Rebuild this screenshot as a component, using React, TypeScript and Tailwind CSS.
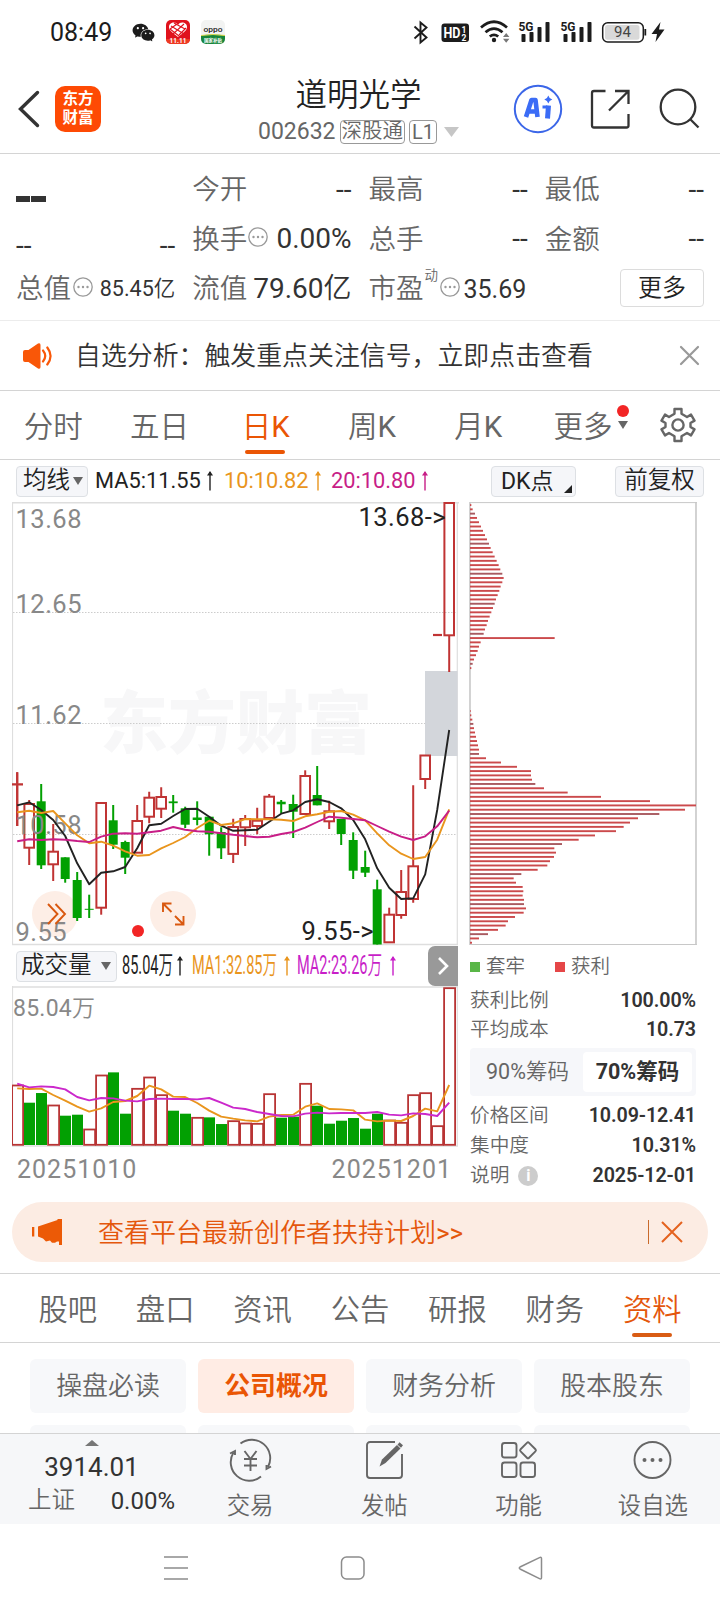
import React from "react";
import { AiFillWechat } from "react-icons/ai";

const FONT = "font-['Roboto','Noto_Sans_CJK_SC',sans-serif]";
const RED = "#c03434";
const GREEN = "#02a002";

type Candle = { t: "r" | "g" | "x"; o: number; c: number; h: number; l: number };

// Screen-space candles: body top, body bottom, wick top, wick bottom.
const rawCandles: [string, number, number, number, number][] = [
  ["r", 783, 785.6, 772.3, 826],
  ["r", 804, 847.7, 800, 865],
  ["g", 801.3, 865.3, 784, 869],
  ["r", 851.7, 864.3, 824, 881],
  ["g", 857.3, 879, 857.3, 882.7],
  ["g", 880, 918, 872, 921],
  ["g", 908.8, 909.8, 894.7, 918],
  ["r", 803, 907.7, 803, 914.7],
  ["g", 820.3, 844.7, 805, 849],
  ["g", 842, 857.7, 840.7, 874],
  ["r", 821, 852.7, 805, 852.7],
  ["r", 797.7, 816.7, 791.7, 823.3],
  ["r", 797, 808.7, 787.3, 818],
  ["g", 801.4, 803.2, 795, 812.7],
  ["g", 808.3, 824.7, 806.7, 828],
  ["g", 817.5, 820, 801.3, 825.3],
  ["g", 816.7, 834.3, 816.7, 855.7],
  ["g", 832, 848.3, 827.3, 859],
  ["r", 827, 853.9, 818.7, 863],
  ["r", 819, 827.3, 815, 846],
  ["r", 820.7, 826, 807.7, 834.3],
  ["r", 796.7, 818, 794, 818],
  ["g", 801.7, 804.3, 800, 813.3],
  ["g", 804, 811.7, 794.7, 838],
  ["r", 776, 814, 770.3, 814],
  ["g", 795, 805.3, 766, 805.3],
  ["r", 811.3, 821.3, 800.7, 829],
  ["g", 819, 834, 819, 845],
  ["g", 840, 870.7, 832.3, 879],
  ["g", 867, 872.7, 850.7, 877],
  ["g", 889.3, 944.5, 879.7, 944.5],
  ["r", 914.7, 942.3, 907.7, 942.3],
  ["r", 892, 915, 870, 918.7],
  ["r", 866.3, 899, 785.3, 902.7],
  ["r", 755.5, 779, 755.5, 789],
  ["x", 635, 635, 635, 635],
  ["r", 503, 635.3, 503, 672],
];
const candles: Candle[] = rawCandles.map(([t, o, c, h, l]) => ({ t: t as Candle["t"], o, c, h, l }));

const ma5 = [805.3, 802.3, 810, 820, 836, 863.3, 884.3, 872.7, 871.3, 867, 848.3, 825.3, 823.7, 816, 809, 808.7, 816.7, 825.7, 830.8, 830.3, 829.7, 821.7, 813.7, 810.3, 802, 799.3, 802, 808.3, 820, 839.3, 868.3, 887.7, 899, 898.3, 874.3, 810, 730];
const ma10 = [812.3, 810.7, 813, 811, 823.3, 835.3, 843.3, 841.7, 845.7, 851.3, 855.7, 855, 848.3, 843, 837, 828, 820.7, 825, 823.3, 819, 819.3, 819.3, 819.7, 821, 816.3, 814.3, 811.7, 811, 814.7, 820.3, 833.3, 845.3, 853.7, 859, 857, 839.7, 809.3];
const ma20 = [841.3, 839.3, 840, 839.3, 839.7, 841, 842, 836.7, 833.7, 833.3, 833.7, 832.3, 830.7, 827, 829.7, 831.3, 831.7, 833.3, 834.8, 836, 837.3, 836.7, 834, 832, 827.7, 822, 816.7, 817.7, 819, 820.3, 826, 831.7, 836.7, 840, 836.3, 826.3, 810.7];

const volumes: [string, number][] = [
  ["r", 315], ["g", 369], ["g", 340], ["r", 375], ["g", 408], ["g", 405], ["r", 447], ["r", 285], ["g", 278], ["g", 402],
  ["r", 325], ["r", 291], ["r", 344], ["g", 393], ["g", 402], ["r", 412], ["g", 413], ["g", 433], ["r", 422], ["r", 429],
  ["r", 430], ["r", 341], ["g", 414], ["g", 411], ["r", 310], ["g", 378], ["g", 432], ["g", 423], ["g", 415], ["g", 447],
  ["g", 402], ["r", 420], ["r", 427], ["r", 344], ["r", 338], ["r", 437], ["r", 23],
];
const volMa1 = [325, 327, 326, 345, 362, 380, 395, 385, 366, 363, 348, 317, 328, 350, 351, 369, 392, 410, 416, 421, 424, 410, 405, 404, 380, 370, 387, 388, 391, 419, 424, 422, 423, 408, 386, 394, 315];
const volMa2 = [311, 322, 319, 321, 328, 351, 361, 354, 355, 362, 364, 357, 356, 357, 357, 358, 354, 368, 383, 387, 396, 402, 408, 409, 401, 398, 400, 399, 399, 399, 396, 404, 406, 400, 402, 408, 368];

const chips: number[] = [
  4, 8, 15, 21, 27, 33, 39, 45, 51, 57, 62, 68, 74, 80, 86, 91, 97, 101, 97, 92, 88, 83, 78, 74, 69, 64, 59, 54, 50, 45, 41, 254,
  32, 27, 23, 18, 12, 8, 4, 0, 0, 0, 0, 0, 0, 0, 0, 0,
  2, 4, 7, 10, 12, 15, 18, 21, 24, 27, 27, 48, 93, 141, 183, 183, 186, 196, 222, 293, 393, 540, 678, 645, 568, 504, 480, 461,
  438, 375, 326, 276, 253, 258, 252, 240, 232, 203, 154, 131, 138, 158, 160, 158, 162, 162, 168, 161, 135, 114, 107, 84, 54, 27, 6,
];

const cx = (k: number) => 17.2 + 12 * k;
const points = (ys: number[]) => ys.map((y, k) => `${cx(k)},${y}`).join(" ");
const vy = (v: number) => 980 + v / 3;

function StatusBar() {
  return (
    <div className="flex h-[64px] items-center justify-between pl-[50px] pr-[54px]">
      <div className="flex items-center">
        <span className="w-[81px] text-[25px] leading-none text-[#1c1c1c]">08:49</span>
        <AiFillWechat className="size-[25px] text-[#1c1c1c]" />
        <svg className="ml-[10px]" width="24" height="24" viewBox="0 0 24 24">
          <rect width="24" height="24" rx="5" fill="#e0121c" />
          <path d="M0 19h24a5 5 0 0 1-5 5H5a5 5 0 0 1-5-5z" fill="#ee3a22" />
          <path d="M12 17C7 13 3 10.500 3 7c0-5 7-6 9-2 2-4 9-3 9 2 0 3.500-4 6-9 10z" fill="#fff" />
          <path d="M5 6l13 8M8 3l11 6M4 9l9 7M18 4L7 14M20 8l-7 7M11 4L4 9" stroke="#e0121c" strokeWidth="1.100" />
          <text x="12" y="23" fontSize="6.500" fontWeight="700" fill="#fff" textAnchor="middle">11.11</text>
        </svg>
        <svg className="ml-[11px]" width="24" height="24" viewBox="0 0 24 24">
          <rect width="24" height="24" rx="5" fill="#f2f3f2" />
          <path d="M0 15.500q12-2 24 0V19a5 5 0 0 1-5 5H5a5 5 0 0 1-5-5z" fill="#16853b" />
          <path d="M0 15.500q12-2 24 0" stroke="#d8d94c" strokeWidth="1" fill="none" />
          <text x="12" y="11.500" fontSize="8" fontWeight="500" fill="#222" textAnchor="middle" textLength="19" lengthAdjust="spacingAndGlyphs">oppo</text>
          <text x="12" y="22" fontSize="4.500" fontWeight="700" fill="#fff" textAnchor="middle">国家补贴</text>
        </svg>
      </div>
      <svg width="256" height="28" viewBox="410 18 256 28" fill="#1c1c1c">
        <path d="M414.500 26.500l12 11-6 5V22.500l6 5-12 11" fill="none" stroke="#1c1c1c" strokeWidth="1.900" />
        <rect x="441.500" y="23.500" width="27.500" height="18.500" rx="3" />
        <text x="443.500" y="38" fontSize="14" fontWeight="700" fill="#fff" textLength="17" lengthAdjust="spacingAndGlyphs">HD</text>
        <text x="461.500" y="32.500" fontSize="8.500" fontWeight="700" fill="#fff">1</text>
        <text x="461.500" y="40.500" fontSize="8.500" fontWeight="700" fill="#fff">2</text>
        <g fill="none" stroke="#1c1c1c" strokeWidth="2.700">
          <path d="M481 27.500q13-11.500 26 0" />
          <path d="M485.500 32.300q8.500-7.500 17 0" />
          <path d="M489.800 36.600q4.200-3.600 8.400 0" />
        </g>
        <circle cx="494" cy="40" r="2.200" />
        <path d="M503 37l3.200-4 3.200 4zM503 38.800l3.200 4 3.200-4z" fill="#777" />
        {[519, 561].map((x) => (
          <g key={x}>
            <text x={x - 0.5} y="31" fontSize="12.500" fontWeight="700" textLength="15" lengthAdjust="spacingAndGlyphs">5G</text>
            <rect x={x + 2.5} y="34" width="4" height="8" rx=".8" />
            <rect x={x + 10.5} y="32" width="4" height="10" rx=".8" />
            <rect x={x + 18.5} y="27" width="4" height="15" rx=".8" />
            <rect x={x + 26.5} y="22" width="4" height="20" rx=".8" />
          </g>
        ))}
        <rect x="602.700" y="22.700" width="40.600" height="19.300" rx="5" fill="#fff" stroke="#1c1c1c" strokeWidth="1.500" />
        <rect x="605" y="25" width="34.500" height="14.700" rx="2.500" fill="#d9d9d9" />
        <path d="M645.300 29v6.500" stroke="#1c1c1c" strokeWidth="1.800" />
        <text x="622.500" y="37.300" fontSize="15" fill="#444" textAnchor="middle">94</text>
        <path d="M660.500 22l-9 12h5.500l-1.500 8 9-12.500h-5.500z" />
      </svg>
    </div>
  );
}

function Header() {
  return (
    <header className="flex h-[90px] items-center justify-between border-b border-[#d4d4d4] pl-[17px] pr-[20px]">
      <div className="flex w-[190px] items-center">
        <svg width="24" height="38" viewBox="17 90 24 38">
          <path d="M37.500 92.500L20.500 109l17 16.500" fill="none" stroke="#333" strokeWidth="3.400" strokeLinecap="round" />
        </svg>
        <div className="ml-[14px] flex size-[46px] flex-col items-center justify-center rounded-[10px] bg-[#fe4a04] text-[15.500px] leading-[19px] font-bold text-white">
          <span>东方</span>
          <span>财富</span>
        </div>
      </div>
      <div className="flex flex-col items-center pt-[3px]">
        <h1 className="text-[31.500px] leading-[40px] font-[350] text-[#222]">道明光学</h1>
        <div className="mt-[3px] flex h-[26px] items-center text-[#666]">
          <span className="text-[23px] leading-none">002632</span>
          <span className="ml-[4px] flex h-[24px] items-center rounded-[4px] border-[1.500px] border-[#999] px-[1px] text-[20.500px] font-[350]">深股通</span>
          <span className="ml-[4px] flex h-[24px] items-center rounded-[4px] border-[1.500px] border-[#999] px-[2px] text-[20px]">L1</span>
          <svg className="ml-[7px]" width="15" height="10"><path d="M0 0h15L7.500 10z" fill="#c6c6c6" /></svg>
        </div>
      </div>
      <svg width="190" height="50" viewBox="511 84 190 50" fill="none" stroke="#333" strokeWidth="2.300">
        <circle cx="539" cy="109" r="23.200" stroke="#3b66e8" strokeWidth="2" />
        <path d="M527 117L532.500 100H536.500L538.500 117M530.500 111.500H536" stroke="#3b6cf6" strokeWidth="4.600" strokeLinejoin="round" />
        <path d="M549.500 105.500l-1 13" stroke="#3b6cf6" strokeWidth="5" />
        <path d="M543.500 107h4M551 116.500h-4" stroke="#3b6cf6" strokeWidth="3" />
        <path d="M549.300 95.500q.8 3.200 4 4-3.200.8-4 4-.8-3.200-4-4 3.200-.8 4-4z" fill="#3b6cf6" stroke="none" />
        <path d="M606.500 91H595a2 2 0 0 0-2 2v32.500a2 2 0 0 0 2 2h32.500a2 2 0 0 0 2-2V114M616 91h13.500v13M629 91.500L610 110.500" />
        <circle cx="679" cy="107" r="17.300" />
        <path d="M691.500 119.500l8 8" />
      </svg>
    </header>
  );
}

function Dots({ className = "" }: { className?: string }) {
  return (
    <svg className={`shrink-0 ${className}`} width="20" height="20" viewBox="0 0 20 20" fill="#999">
      <circle cx="10" cy="10" r="9.200" fill="none" stroke="#999" strokeWidth="1.300" />
      <circle cx="5.500" cy="10" r="1.200" /><circle cx="10" cy="10" r="1.200" /><circle cx="14.500" cy="10" r="1.200" />
    </svg>
  );
}

const label = "text-[27.500px] font-[350] text-[#666]";
const cell = "flex items-center justify-between whitespace-nowrap";

function Quote() {
  return (
    <section className="grid h-[167px] grid-cols-4 grid-rows-3 gap-x-[17px] border-b border-[#ececec] px-[16px] pt-[11px] pb-[6px] text-[28px] leading-none text-[#333]">
      <div className={cell}><span className="mt-[19px] flex gap-[1px]"><i className="h-[6px] w-[14px] bg-[#333]" /><i className="h-[6px] w-[15px] bg-[#333]" /></span></div>
      <div className={cell}><span className={label}>今开</span><span>--</span></div>
      <div className={cell}><span className={label}>最高</span><span>--</span></div>
      <div className={cell}><span className={label}>最低</span><span>--</span></div>
      <div className={`${cell} pt-[14px]`}><span>--</span><span>--</span></div>
      <div className={cell}><span className="flex items-center"><span className={label}>换手</span><Dots className="mb-[4px] ml-[1px]" /></span><span>0.00%</span></div>
      <div className={cell}><span className={label}>总手</span><span>--</span></div>
      <div className={cell}><span className={label}>金额</span><span>--</span></div>
      <div className={cell}><span className="flex items-center"><span className={label}>总值</span><Dots className="mb-[4px] ml-[2px]" /></span><span className="text-[21.500px]">85.45<span className="font-[350]">亿</span></span></div>
      <div className={cell}><span className={label}>流值</span><span>79.60<span className="font-[350]">亿</span></span></div>
      <div className="flex items-center whitespace-nowrap">
        <span className={label}>市盈</span>
        <span className="mb-[26px] ml-[1px] w-[14px] text-[13.500px] font-[350] text-[#666]">动</span>
        <Dots className="mb-[4px] ml-[1px]" />
        <span className="ml-[4px] text-[25px]">35.69</span>
      </div>
      <div className="flex items-center justify-end">
        <button className="mb-[3px] h-[38px] w-[84px] rounded-[4px] border border-[#dcdcdc] text-[24px] leading-none font-[350] text-[#222]">更多</button>
      </div>
    </section>
  );
}

function Notice() {
  return (
    <section className="flex h-[70px] items-center border-b border-[#d4d4d4] pr-[20px] pl-[22px]">
      <svg width="31" height="26" viewBox="22 342 31 26" fill="#f95708">
        <path d="M23 351q0-2 2-2h3.500l9.500-6.500q2.500-1 2.500 1.500v22q0 2.500-2.500 1.500l-9.500-6.500H25q-2 0-2-2z" />
        <path d="M43 349.500q4.500 5.500 0 11M47.300 346.500q6.500 8.500 0 17" fill="none" stroke="#f95708" strokeWidth="2.200" strokeLinecap="round" />
      </svg>
      <span className="mt-[2px] ml-[22px] text-[25.900px] font-[350] text-[#333]">自选分析：触发重点关注信号，立即点击查看</span>
      <svg className="ml-auto" width="21" height="21"><path d="M2 2l17 17M19 2L2 19" stroke="#999" strokeWidth="2.200" strokeLinecap="round" /></svg>
    </section>
  );
}

function PeriodTabs() {
  return (
    <nav className="flex h-[69px] border-b border-[#d4d4d4] text-[29.500px] font-[350] text-[#666]">
      {["分时", "五日", "日K", "周K", "月K"].map((t) => (
        <div key={t} className={`relative flex w-[106.300px] items-center justify-center pt-[4px] ${t === "日K" ? "text-[#ea5504]" : ""}`}>
          {t.replace("K", "")}
          {t.endsWith("K") && <span className="font-normal">K</span>}
          {t === "日K" && <i className="absolute bottom-[5px] left-[32.500px] h-[4px] w-[40px] rounded-full bg-[#ea5504]" />}
        </div>
      ))}
      <div className="relative flex w-[116px] items-center pt-[4px] pl-[22px]">
        更多
        <i className="absolute top-[14px] left-[86px] size-[12px] rounded-full bg-[#f22525]" />
        <svg className="absolute top-[30px] left-[87px]" width="10" height="8"><path d="M0 0h10L5 8z" fill="#666" /></svg>
      </div>
      <svg className="mt-[16px] ml-[13px]" width="36" height="36" viewBox="661 407 36 36" fill="none" stroke="#666" strokeWidth="2.400" strokeLinejoin="round">
        <path d="M675.500 409h7v4.800l5.500 3.200 4-2.400 3.500 6-4 2.400v4l4 2.400-3.500 6-4-2.400-5.500 3.200v4.800h-7v-4.800l-5.500-3.200-4 2.400-3.500-6 4-2.400v-4l-4-2.400 3.500-6 4 2.400 5.500-3.200z" />
        <circle cx="679" cy="425" r="5.600" />
      </svg>
    </nav>
  );
}

function Up({ color, className = "" }: { color: string; className?: string }) {
  return (
    <svg className={`shrink-0 ${className}`} width="8" height="20" viewBox="0 0 8 20">
      <path d="M4 1v18.500" stroke={color} strokeWidth="1.400" />
      <path d="M4 0l3 4.500H1z" fill={color} />
    </svg>
  );
}

const chipBtn = "flex shrink-0 items-center rounded-[4px] border border-[#dde0e4] bg-[#f5f6f9] text-[#222]";

function MaRow() {
  return (
    <div className="flex h-[42px] items-center pr-[16px] pl-[16px] text-[21.800px] leading-none whitespace-nowrap text-[#222]">
      <div className={`${chipBtn} h-[31px] w-[72px] pl-[6px] text-[23.500px] font-[350]`}>均线<svg className="ml-[3px]" width="10" height="8"><path d="M0 0h10L5 8z" fill="#666" /></svg></div>
      <span className="ml-[7px] w-[105px]">MA5:11.55</span><Up color="#222" className="ml-[6px]" />
      <span className="ml-[10px] w-[84px] text-[#e9951d]">10:10.82</span><Up color="#e9951d" className="ml-[6px]" />
      <span className="ml-[9px] w-[84px] text-[#c81e87]">20:10.80</span><Up color="#c81e87" className="ml-[6px]" />
      <div className={`${chipBtn} relative ml-auto h-[31px] w-[85px] pl-[9px] text-[23px]`}>DK<span className="font-[350]">点</span><svg className="absolute right-[3px] bottom-[3px]" width="8" height="8"><path d="M8 0v8H0z" fill="#222" /></svg></div>
      <div className={`${chipBtn} ml-[39px] h-[31px] w-[89px] justify-center text-[23.500px] font-[350]`}>前复权</div>
    </div>
  );
}

function KChart() {
  return (
    <svg className="block" width="448" height="444" viewBox="12 502 448 444">
      <g fill="#f7f7f8" fontSize="68" fontWeight="900">
        <text x="100" y="748" textLength="272" lengthAdjust="spacingAndGlyphs">东方财富</text>
      </g>
      <path d="M12 502.700H459" stroke="#dedede" strokeWidth="1.800" />
      <path d="M12.500 502V945M457.300 502V945" stroke="#dedede" strokeWidth="1.200" />
      <path d="M12 944.500H458" stroke="#dedede" strokeWidth="1.600" />
      <path d="M13 612.500H457M13 723.500H457M13 834.500H457" stroke="#ccc" strokeWidth="1" strokeDasharray="1.500 1.500" />
      <rect x="425" y="671" width="32.500" height="85" fill="#d3d6db" />
      <circle cx="55" cy="914" r="23" fill="#fdeee6" />
      <circle cx="173" cy="914" r="23" fill="#fdeee6" />
      {candles.map((c, k) => {
        const x = cx(k);
        if (c.t === "x") return <path key={k} d="M433 635H442" stroke={RED} strokeWidth="2.200" />;
        const thin = c.c - c.o < 3.5;
        if (c.t === "g")
          return (
            <g key={k} fill={GREEN}>
              <rect x={x - 1} y={c.h} width="2" height={c.l - c.h} />
              <rect x={x - 4.5} y={c.o} width="9" height={c.c - c.o} />
            </g>
          );
        return (
          <g key={k} stroke={RED} strokeWidth="2" fill="none">
            <path d={`M${x} ${c.h}V${c.o}M${x} ${c.c}V${c.l}`} />
            {thin ? <path d={`M12 784.300H23M${x} ${c.h}V${c.l}`} strokeWidth="2.200" /> : <rect x={x - 4.8} y={c.o} width="9.600" height={c.c - c.o} />}
          </g>
        );
      })}
      <g fontSize="25.500" fill="#888">
        <text x="15.500" y="528" textLength="66">13.68</text>
        <text x="15.500" y="613" textLength="66">12.65</text>
        <text x="15.500" y="724" textLength="66">11.62</text>
        <text x="15.500" y="834" textLength="66">10.58</text>
        <text x="15.500" y="940.500" textLength="51">9.55</text>
      </g>
      <g fill="none" strokeWidth="1.900" strokeLinejoin="round">
        <polyline points={points(ma5)} stroke="#222" />
        <polyline points={points(ma10)} stroke="#e9951d" />
        <polyline points={points(ma20)} stroke="#c81e87" />
      </g>
      <g fontSize="25.500" fill="#222">
        <text x="358.500" y="526" textLength="87">13.68-&gt;</text>
        <text x="301.500" y="940" textLength="72">9.55-&gt;</text>
      </g>
      <g fill="none" stroke="#d9580f" strokeWidth="1.900">
        <path d="M48 904l9.500 10-9.500 10M55.500 904l9.500 10-9.500 10" />
        <path d="M163 912v-8.500h8.500M163 903.500l8.500 8.500M183.500 916v8.500H175M183.500 924.500l-8.500-8.500" />
      </g>
      <circle cx="138" cy="931" r="6" fill="#f22525" />
    </svg>
  );
}

function VolBar() {
  return (
    <div className="flex h-[40px] items-center text-[25.500px] leading-none whitespace-nowrap">
      <div className={`${chipBtn} ml-[4px] h-[31px] w-[101px] pl-[4px] text-[23.500px] font-[350]`}>成交量<svg className="ml-[9px]" width="10" height="8"><path d="M0 0h10L5 8z" fill="#666" /></svg></div>
      <span className="ml-[5px] w-[51px] text-[#222]"><span className="inline-block origin-left scale-x-[0.570]">85.04<span className="font-[350]">万</span></span></span><Up color="#222" className="ml-[3px]" />
      <span className="ml-[8px] w-[86px] text-[#e9951d]"><span className="inline-block origin-left scale-x-[0.570]">MA1:32.85<span className="font-[350]">万</span></span></span><Up color="#e9951d" className="ml-[5px]" />
      <span className="ml-[6px] w-[88px] text-[#c81ec8]"><span className="inline-block origin-left scale-x-[0.570]">MA2:23.26<span className="font-[350]">万</span></span></span><Up color="#c81ec8" className="ml-[4px]" />
      <div className="ml-auto mr-[2px] flex h-[40px] w-[30px] shrink-0 items-center justify-center rounded-l-[7px] bg-[#999]">
        <svg width="12" height="18" viewBox="0 0 12 18"><path d="M2 1l8 8-8 8" fill="none" stroke="#fff" strokeWidth="2.600" /></svg>
      </div>
    </div>
  );
}

function VolChart() {
  return (
    <svg className="block" width="448" height="162" viewBox="12 986 448 162">
      <path d="M12 987H458M12 1146H458" stroke="#dedede" strokeWidth="1.600" />
      <path d="M12.500 986V1146M457.300 986V1146" stroke="#dedede" strokeWidth="1.200" />
      <text x="13" y="1016" fontSize="23" fill="#888" textLength="82">85.04<tspan fontWeight="350">万</tspan></text>
      {volumes.map(([t, v], k) =>
        t === "g" ? (
          <rect key={k} x={cx(k) + 0.3 - 5.5} y={vy(v) - 0.3} width="11" height={1145.3 - vy(v)} fill={GREEN} />
        ) : (
          <rect key={k} x={cx(k) + 0.3 - 5.4} y={vy(v) + 0.5} width="11" height={1144.3 - vy(v)} fill="none" stroke="#b83434" strokeWidth="1.800" />
        )
      )}
      <g fill="none" strokeWidth="1.900" strokeLinejoin="round">
        <polyline points={points(volMa1.map(vy))} stroke="#e9951d" />
        <polyline points={points(volMa2.map(vy))} stroke="#cb28cb" />
      </g>
    </svg>
  );
}

function ChipChart() {
  return (
    <svg className="block" width="228" height="444" viewBox="469 502 228 444">
      <path d="M470 502.600H697M470 944.500H697" stroke="#c8c8c8" strokeWidth="1" />
      <path d="M470 502V945M696 502V945" stroke="#c8c8c8" strokeWidth="1.600" />
      {chips.map((w, i) =>
        w ? <rect key={i} x="470" y={504.1 + i * 4.291} width={w / 3} height="1.900" fill={i % 7 === 2 ? "#a85a60" : "#cb4a4c"} /> : null
      )}
    </svg>
  );
}

function Row({ k, v, h, info }: { k: string; v: string; h: string; info?: boolean }) {
  return (
    <div className={`flex items-center justify-between ${h}`}>
      <span className="flex items-center text-[19.700px] font-[350] text-[#666]">
        {k}
        {info && <i className="ml-[9px] flex size-[20px] items-center justify-center rounded-full bg-[#ccc] text-[16px] leading-none font-bold text-white not-italic">i</i>}
      </span>
      <b className="text-[19.700px] font-semibold tracking-[-0.100px] text-[#333]">{v}</b>
    </div>
  );
}

function ChipPanel() {
  return (
    <aside className="ml-[9px] w-[228px]">
      <ChipChart />
      <div className="ml-[1px] flex h-[41px] items-center text-[19.500px] font-[350] text-[#666]">
        <i className="size-[10px] bg-[#59b647]" /><span className="ml-[6px]">套牢</span>
        <i className="ml-[30px] size-[10px] bg-[#e54648]" /><span className="ml-[6px]">获利</span>
      </div>
      <div className="-mt-[1px] ml-[1px] w-[226px] leading-none">
        <Row k="获利比例" v="100.00%" h="h-[29px]" />
        <Row k="平均成本" v="10.73" h="h-[29px]" />
        <div className="mt-[4px] mb-[5px] flex h-[48px] items-center rounded-[4px] bg-[#f6f7fa] p-[4px] text-[21.500px] whitespace-nowrap">
          <span className="flex-1 pr-[2px] text-center text-[#666]">90%<span className="font-[350]">筹码</span></span>
          <span className="flex h-[40px] w-[109px] items-center justify-center rounded-[4px] bg-white font-bold text-[#333]">70%筹码</span>
        </div>
        <Row k="价格区间" v="10.09-12.41" h="h-[30px]" />
        <Row k="集中度" v="10.31%" h="h-[30px]" />
        <Row k="说明" v="2025-12-01" h="h-[29px]" info />
      </div>
    </aside>
  );
}

function Banner() {
  return (
    <div className="mx-[12px] mt-[10px] flex h-[60px] items-center rounded-full bg-[#fcece3] pr-[24px] pl-[20px] text-[#e4570c]">
      <svg width="31" height="28" viewBox="32 1218 31 28" fill="#ec5a06">
        <path d="M32 1227h2.300v9.500H32zM38 1226.500l19.500-6.500V1219H62v26h-3v-3.500h-2l-2 1.200h-3l-2-2.200-4 1-3-3-5-2z" />
      </svg>
      <span className="mt-[2px] ml-[35px] text-[26px] font-[350]">查看平台最新创作者扶持计划<span className="font-normal">&gt;&gt;</span></span>
      <i className="ml-auto h-[24px] w-px bg-[#c96a2b]" />
      <svg className="ml-[11px]" width="24" height="24"><path d="M2 2l20 20M22 2L2 22" stroke="#e4621f" strokeWidth="2" /></svg>
    </div>
  );
}

function InfoTabs() {
  return (
    <nav className="mt-[11px] flex h-[70px] border-y border-[#d4d4d4] px-[19px] text-[29.300px] font-[350] text-[#666]">
      {["股吧", "盘口", "资讯", "公告", "研报", "财务", "资料"].map((t) => (
        <div key={t} className={`relative flex flex-1 items-center justify-center pt-[5px] ${t === "资料" ? "text-[#e4570c]" : ""}`}>
          {t}
          {t === "资料" && <i className="absolute bottom-[5px] left-[28.500px] h-[4px] w-[40px] rounded-full bg-[#d95c14]" />}
        </div>
      ))}
    </nav>
  );
}

function SubGrid() {
  return (
    <div className="grid h-[90px] grid-cols-4 content-start gap-3 overflow-hidden px-[30px] pt-[16px] text-[25.900px] font-[350] text-[#666]">
      {["操盘必读", "公司概况", "财务分析", "股本股东", "", "", "", ""].map((t, i) => (
        <div key={i} className={`flex h-[54px] items-center justify-center rounded-[6px] ${i === 1 ? "bg-[#ffece4] font-bold text-[#ea5504]" : "bg-[#f7f8fa]"}`}>{t}</div>
      ))}
    </div>
  );
}

const actions: [string, React.ReactNode][] = [
  ["交易", <>
    <path d="M10.500 3.500A18.500 18.500 0 0 1 38 27M31 36.500A18.500 18.500 0 0 1 3.500 12.500M0 13.500l5-2.500v4M41 26.500l-4.500 2.500v-4" />
    <path d="M14.500 11l6 8 6-8M14 19h13M14 25.500h13M20.500 19v12" />
  </>],
  ["发帖", <>
    <path d="M31 2H6a3 3 0 0 0-3 3v30a3 3 0 0 0 3 3h29a3 3 0 0 0 3-3V14" />
    <path d="M15.500 26.500l2.500-7L33 5l3.500 3.500L21.500 23z" fill="#666" stroke="none" /><path d="M34.500 3.500l3.500 3" strokeWidth="3" />
  </>],
  ["功能", <>
    <rect x="4" y="3" width="14.500" height="14.500" rx="2.500" /><rect x="4" y="22.500" width="14.500" height="14.500" rx="2.500" />
    <rect x="22.500" y="22.500" width="14.500" height="14.500" rx="2.500" /><rect x="24" y="4.300" width="12" height="12" rx="1.500" transform="rotate(45 30 10.300)" />
  </>],
  ["设自选", <>
    <circle cx="20.500" cy="20" r="18" />
    <g fill="#666" stroke="none"><circle cx="12.500" cy="20" r="2" /><circle cx="20.500" cy="20" r="2" /><circle cx="28.500" cy="20" r="2" /></g>
  </>],
];

function BottomBar() {
  return (
    <footer className="flex h-[91px] border-t border-[#d4d4d4] bg-[#f6f7f9]">
      <div className="flex w-[183px] flex-col items-center leading-none">
        <svg className="mt-[6px]" width="14" height="6"><path d="M0 6l7-6 7 6z" fill="#777" /></svg>
        <span className="mt-[8px] text-[26px] text-[#333]">3914.01</span>
        <div className="mt-[9px] flex w-full items-center justify-between pr-[8px] pl-[28px] text-[23.500px] font-[350] text-[#666]">
          上证<span className="text-[24px] font-normal text-[#333]">0.00%</span>
        </div>
      </div>
      {actions.map(([t, icon]) => (
        <div key={t} className="flex flex-1 flex-col items-center pt-[6px] text-[23.400px] leading-none font-[350] text-[#666]">
          <svg className="overflow-visible" width="41" height="40" viewBox="0 0 41 40" fill="none" stroke="#666" strokeWidth="1.900">{icon}</svg>
          <span className="mt-[15px]">{t}</span>
        </div>
      ))}
    </footer>
  );
}

function SystemNav() {
  return (
    <div className="flex h-[88px] items-center justify-between pr-[177px] pl-[164px]">
      <svg width="24" height="26" viewBox="0 0 24 26" stroke="#8c8c8c" strokeWidth="1.600"><path d="M0 2h24M0 13h24M0 24h24" /></svg>
      <svg width="26" height="26" viewBox="0 0 26 26" fill="none" stroke="#8c8c8c" strokeWidth="1.500"><rect x="1.500" y="2" width="22.500" height="22" rx="5" /></svg>
      <svg width="25" height="26" viewBox="0 0 25 26" fill="none" stroke="#8c8c8c" strokeWidth="1.500"><path d="M21.500 2.600q2-1 2 1v19q0 2-2 1L2 14q-1.500-1 0-2z" /></svg>
    </div>
  );
}

export default function App() {
  return (
    <div className={`h-[1612px] w-[720px] overflow-hidden bg-white ${FONT}`}>
      <StatusBar />
      <Header />
      <Quote />
      <Notice />
      <PeriodTabs />
      <MaRow />
      <div className="flex h-[690px] pl-[12px]">
        <div className="w-[448px]">
          <KChart />
          <VolBar />
          <VolChart />
          <div className="flex h-[44px] items-center justify-between pr-[8px] pl-[5px] text-[25px] tracking-[1px] text-[#888]">
            <span>20251010</span>
            <span>20251201</span>
          </div>
        </div>
        <ChipPanel />
      </div>
      <Banner />
      <InfoTabs />
      <SubGrid />
      <BottomBar />
      <SystemNav />
    </div>
  );
}
